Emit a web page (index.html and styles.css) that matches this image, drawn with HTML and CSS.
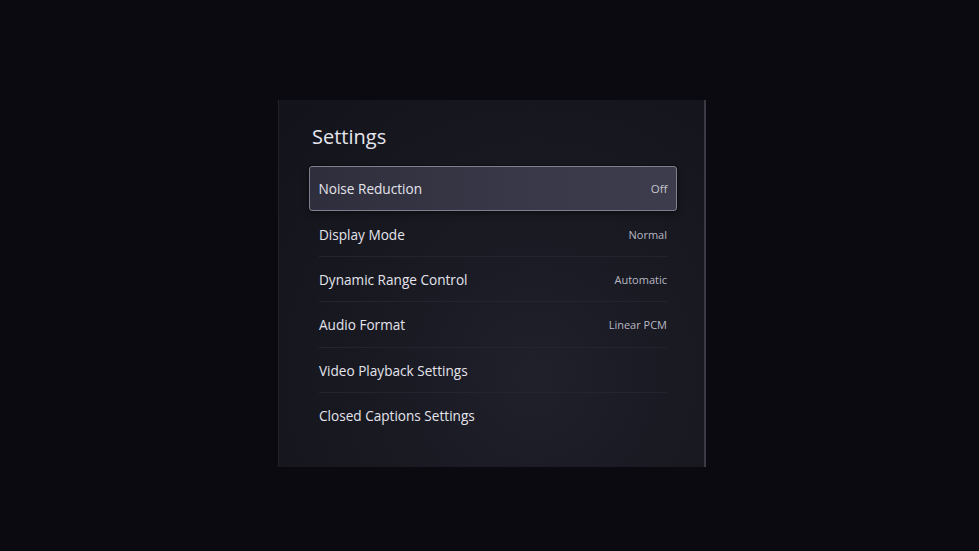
FILE: index.html
```html
<!DOCTYPE html>
<html lang="en">
<head>
    <meta charset="UTF-8">
    <meta name="viewport" content="width=device-width, initial-scale=1.0">
    <title>Settings</title>
    <link rel="stylesheet" href="styles.css">
</head>
<body>
    <div class="panel">
        <h1 class="title">Settings</h1>
        <ul class="menu">
            <li class="item selected"><span class="label">Noise Reduction</span><span class="value">Off</span></li>
            <li class="item"><span class="label">Display Mode</span><span class="value">Normal</span></li>
            <li class="item"><span class="label">Dynamic Range Control</span><span class="value">Automatic</span></li>
            <li class="item"><span class="label">Audio Format</span><span class="value">Linear PCM</span></li>
            <li class="item"><span class="label">Video Playback Settings</span></li>
            <li class="item last"><span class="label">Closed Captions Settings</span></li>
        </ul>
    </div>
</body>
</html>
```

FILE: styles.css
```css
* {
    box-sizing: border-box;
}

body {
    margin: 0;
    height: 100vh;
    background-color: #0a0a10;
    font-family: "Open Sans", "Noto Sans", sans-serif;
    color: #e2e2ea;
    overflow: hidden;
}

.panel {
    width: 428px;
    height: 367px;
    margin: 100px 0 0 278px;
    padding: 0 27px 0 30px;
    background: radial-gradient(ellipse at 60% 75%, #20202b 0%, #191922 45%, #13131b 100%);
    border-left: 1px solid #22222c;
    border-right: 2px solid #3a3a44;
}

.title {
    margin: 0;
    padding: 23px 0 0 3px;
    height: 66px;
    font-size: 20px;
    font-weight: normal;
    color: #e6e6ee;
}

.menu {
    list-style: none;
    margin: 0;
    padding: 0;
}

.item {
    position: relative;
    display: flex;
    align-items: center;
    justify-content: space-between;
    height: 45.4px;
    padding: 0 10px;
    font-size: 13.6px;
}

/* thin divider between plain rows, inset to the text */
.item::after {
    content: "";
    position: absolute;
    left: 10px;
    right: 10px;
    bottom: 0;
    height: 1px;
    background-color: #24242e;
}

.item.selected::after,
.item.last::after {
    display: none;
}

.item.selected {
    border: 1.5px solid #80808e;
    border-radius: 3px;
    background: linear-gradient(90deg, #2e2e3c 0%, #383848 55%, #3c3c4c 100%);
    box-shadow: 0 0 0 1px #0e0e14, 0 2px 6px rgba(0, 0, 0, 0.5);
    padding: 0 8.5px 0 8.5px;
}

.label {
    color: #e4e4ec;
}

.value {
    font-size: 11px;
    color: #b8b8c2;
}

.selected .value {
    font-size: 11.5px;
    color: #c4c4ce;
}
```
